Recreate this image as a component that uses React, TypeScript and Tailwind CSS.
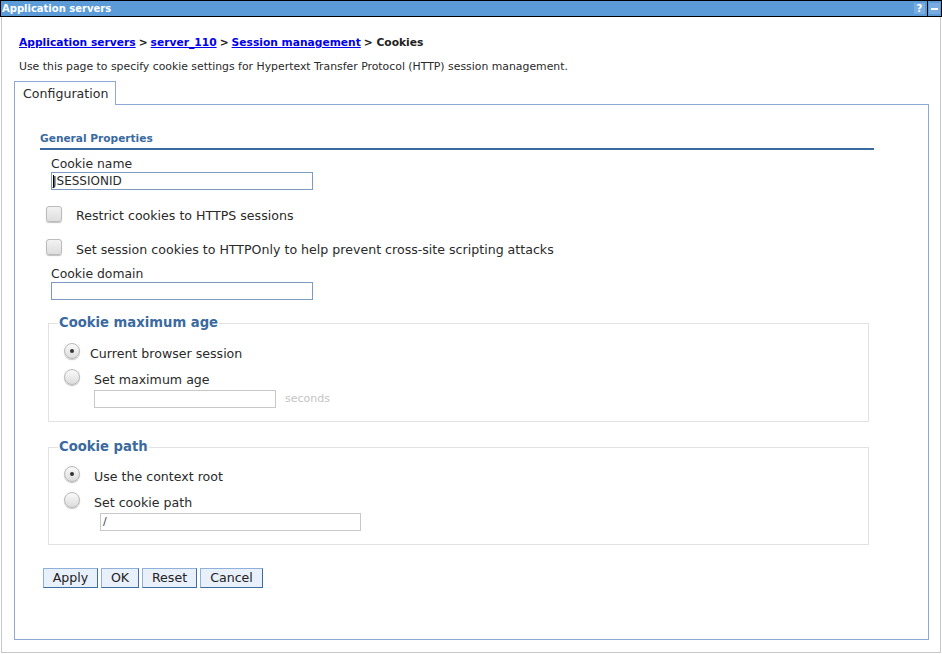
import React from 'react';

const Radio: React.FC<{ checked?: boolean }> = ({ checked = false }) => (
  <div className="w-[16px] h-[16px] shrink-0 rounded-full border border-[#b8b8b8] bg-gradient-to-b from-[#fafafa] to-[#dcdcdc] shadow-[0_1px_1px_rgba(0,0,0,0.25)] flex items-center justify-center">
    {checked && <div className="w-[4px] h-[4px] rounded-full bg-[#333]" />}
  </div>
);

const Checkbox: React.FC = () => (
  <div className="w-[16px] h-[16px] shrink-0 rounded-[3px] border border-[#bcbcbc] bg-gradient-to-b from-[#f2f2f2] to-[#dedede] shadow-[0_1px_1px_rgba(0,0,0,0.25)]" />
);

const Button: React.FC<{ label: string; width: string }> = ({ label, width }) => (
  <button
    className={`${width} h-[20px] text-[12.6px] leading-[18px] text-[#222] bg-[#e8f0fb] border border-[#8fb0d8] border-r-[#3d6da6] border-b-[#3d6da6]`}
  >
    {label}
  </button>
);

const Sep: React.FC<{ text?: string }> = ({ text }) => (
  <span className="px-[3px] text-[#222]">&gt;{text ? ` ${text}` : ''}</span>
);

export default function App() {
  return (
    <div className="w-[942px] h-[654px] bg-white font-['DejaVu_Sans',sans-serif] text-[#2a2a2a]">
      {/* title bar */}
      <div className="h-[17px] border border-black bg-[#5b9bd8] flex items-center justify-between">
        <span className="pl-[1px] text-white font-bold text-[10px] leading-[15px]">Application servers</span>
        <div className="flex items-center h-full">
          <div className="w-[11px] h-[11px] mr-[1px] bg-[#78ace0] text-white font-bold text-[10px] leading-[11px] text-center">?</div>
          <div className="w-[1px] h-full bg-black ml-[1px]" />
          <div className="w-[11px] h-[11px] mx-[1px] bg-[#78ace0] flex items-center justify-center">
            <div className="w-[7px] h-[2px] bg-white" />
          </div>
        </div>
      </div>

      <div className="ml-[1px] w-[940px] h-[636px] border-l border-r border-b border-[#c8c8c8] px-[17px]">
        <div className="pt-[18px] text-[10.7px] leading-[16px] font-bold">
          <a className="text-[#0000ee] underline" href="#">Application servers</a>
          <Sep />
          <a className="text-[#0000ee] underline" href="#">server_110</a>
          <Sep />
          <a className="text-[#0000ee] underline" href="#">Session management</a>
          <Sep text="Cookies" />
        </div>
        <div className="mt-[8px] text-[10.86px] leading-[16px]">
          Use this page to specify cookie settings for Hypertext Transfer Protocol (HTTP) session management.
        </div>

        {/* tab */}
        <div className="mt-[6px] -ml-[5px] relative z-10 w-[102px] h-[24px] pl-[8px] border border-b-0 border-[#8ea8d8] bg-white text-[12.6px] leading-[23px]">
          Configuration
        </div>
        <div className="-ml-[5px] -mt-[1px] w-[915px] h-[536px] border border-[#8ea8d8] pl-[25px] pt-[25px]">
          <div className="w-[834px] border-b-2 border-[#3a6a9f] text-[10.6px] leading-[16px] font-bold text-[#3a6a9f] pb-[2px]">
            General Properties
          </div>

          <div className="ml-[11px]">
            <div className="mt-[6px] text-[12.4px] leading-[16px]">Cookie name</div>
            <div className="w-[262px] h-[18px] border border-[#7c99c2] text-[12px] leading-[16px] pl-[1px] flex items-center">
              <span className="w-[1px] h-[13px] bg-black -mr-[1px]" />
              JSESSIONID
            </div>

            <div className="mt-[16px] -ml-[5px] flex items-start">
              <Checkbox />
              <span className="ml-[14px] mt-[2px] text-[12.6px] leading-[16px]">Restrict cookies to HTTPS sessions</span>
            </div>
            <div className="mt-[15px] -ml-[5px] flex items-start">
              <Checkbox />
              <span className="ml-[14px] mt-[3px] text-[12.6px] leading-[16px]">
                Set session cookies to HTTPOnly to help prevent cross-site scripting attacks
              </span>
            </div>

            <div className="mt-[8px] text-[12.4px] leading-[16px]">Cookie domain</div>
            <div className="w-[262px] h-[18px] border border-[#7c99c2]" />
          </div>

          {/* cookie maximum age */}
          <fieldset className="mt-[15px] ml-[8px] w-[821px] border border-[#e2e2e2] pl-[15px] pb-[13px]">
            <legend className="-ml-[6px] px-[1px] text-[13.2px] leading-[16px] font-bold text-[#3a6a9f]">Cookie maximum age</legend>
            <div className="mt-[12px] flex items-start">
              <Radio checked />
              <span className="ml-[10px] mt-[3px] text-[12.6px] leading-[16px]">Current browser session</span>
            </div>
            <div className="mt-[7px] flex items-start">
              <Radio />
              <span className="ml-[14px] mt-[3px] text-[12.6px] leading-[16px]">Set maximum age</span>
            </div>
            <div className="mt-[2px] ml-[30px] flex items-center">
              <div className="w-[182px] h-[18px] border border-[#c8c8c8]" />
              <span className="ml-[9px] text-[11px] leading-[16px] text-[#c4c4c4]">seconds</span>
            </div>
          </fieldset>

          {/* cookie path */}
          <fieldset className="mt-[17px] ml-[8px] w-[821px] border border-[#e2e2e2] pl-[15px] pb-[13px]">
            <legend className="-ml-[6px] px-[1px] text-[13.2px] leading-[16px] font-bold text-[#3a6a9f]">Cookie path</legend>
            <div className="mt-[11px] flex items-start">
              <Radio checked />
              <span className="ml-[14px] mt-[3px] text-[12.6px] leading-[16px]">Use the context root</span>
            </div>
            <div className="mt-[7px] flex items-start">
              <Radio />
              <span className="ml-[14px] mt-[3px] text-[12.6px] leading-[16px]">Set cookie path</span>
            </div>
            <div className="mt-[2px] ml-[36px] w-[261px] h-[18px] border border-[#c8c8c8] text-[11px] leading-[16px] pl-[2px] text-[#444]">
              /
            </div>
          </fieldset>

          <div className="mt-[23px] ml-[3px] flex gap-[3px]">
            <Button label="Apply" width="w-[55px]" />
            <Button label="OK" width="w-[38px]" />
            <Button label="Reset" width="w-[55px]" />
            <Button label="Cancel" width="w-[63px]" />
          </div>
        </div>
      </div>
    </div>
  );
}
